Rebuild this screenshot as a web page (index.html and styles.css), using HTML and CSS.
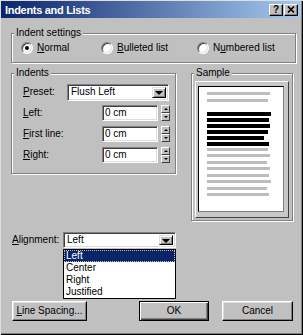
FILE: index.html
```html
<!DOCTYPE html>
<html lang="en">
<head>
	<meta charset="utf-8">
	<title>Indents and Lists</title>
	<link rel="stylesheet" href="styles.css">
</head>
<body>
<div class="window">
	<div class="titlebar">
		<span class="title">Indents and Lists</span>
		<span class="caps">
			<span class="cap">?</span>
			<span class="cap"><svg width="8" height="7" viewBox="0 0 8 7"><path d="M1 0.5 L7 6.5 M7 0.5 L1 6.5" stroke="#000" stroke-width="1.7" fill="none"/></svg></span>
		</span>
	</div>
	<div class="content">
		<div class="group settings">
			<span class="caption">Indent settings</span>
			<div class="radios">
				<span class="radio r-normal"><span class="dot on"></span><span><u>N</u>ormal</span></span>
				<span class="radio r-bullet"><span class="dot"></span><span><u>B</u>ulleted list</span></span>
				<span class="radio"><span class="dot"></span><span>N<u>u</u>mbered list</span></span>
			</div>
		</div>

		<div class="mid">
			<div class="group indents">
				<span class="caption">Indents</span>
				<div class="rows">
					<div class="row">
						<span class="lbl preset-lbl"><u>P</u>reset:</span>
						<span class="field combo preset"><span>Flush Left</span><span class="drop"></span></span>
					</div>
					<div class="row">
						<span class="lbl"><u>L</u>eft:</span>
						<span class="field num">0 cm</span>
						<span class="spin"><span class="up"></span><span class="dn"></span></span>
					</div>
					<div class="row">
						<span class="lbl"><u>F</u>irst line:</span>
						<span class="field num">0 cm</span>
						<span class="spin"><span class="up"></span><span class="dn"></span></span>
					</div>
					<div class="row">
						<span class="lbl"><u>R</u>ight:</span>
						<span class="field num">0 cm</span>
						<span class="spin"><span class="up"></span><span class="dn"></span></span>
					</div>
				</div>
			</div>

			<div class="group sample">
				<span class="caption">Sample</span>
				<div class="panel">
					<div class="page">
						<div class="ln" style="width:63px"></div>
						<div class="ln gap" style="width:61px"></div>
						<div class="ln b" style="width:64px"></div>
						<div class="ln b" style="width:62px"></div>
						<div class="ln b" style="width:63px"></div>
						<div class="ln b" style="width:61px"></div>
						<div class="ln b" style="width:57px"></div>
						<div class="ln b" style="width:62px"></div>
						<div class="ln" style="width:61px"></div>
						<div class="ln" style="width:63px"></div>
						<div class="ln" style="width:60px"></div>
						<div class="ln" style="width:63px"></div>
						<div class="ln" style="width:62px"></div>
						<div class="ln" style="width:64px"></div>
						<div class="ln" style="width:60px"></div>
						<div class="ln" style="width:62px"></div>
					</div>
				</div>
			</div>
		</div>

		<div class="align-row">
			<span class="lbl align-lbl"><u>A</u>lignment:</span>
			<div class="combo-wrap">
				<span class="field combo align"><span>Left</span><span class="drop"></span></span>
				<ul class="list">
					<li class="sel">Left</li>
					<li>Center</li>
					<li>Right</li>
					<li>Justified</li>
				</ul>
			</div>
		</div>

		<div class="buttons">
			<span class="btn spacing"><u>L</u>ine Spacing...</span>
			<span class="btn ok">OK</span>
			<span class="btn cancel">Cancel</span>
		</div>
	</div>
</div>
</body>
</html>
```

FILE: styles.css
```css
body {
	margin: 0;
	font-family: "Liberation Sans", Arial, sans-serif;
	font-size: 10px;
	line-height: 12px;
	color: #000;
	background: #c0c0c0;
}
.window {
	width: 303px;
	height: 335px;
	box-sizing: border-box;
	padding: 1px 2px 0 1px;
	background: #c0c0c0;
	box-shadow: inset 1px 1px #dfdfdf, inset -1px -1px #000, inset -2px -2px #808080;
}

/* title bar */
.titlebar {
	height: 17px;
	display: flex;
	align-items: center;
	justify-content: space-between;
	padding: 0 3px 0 4px;
	background: linear-gradient(to right, #0a246a, #a6caf0);
}
.title {
	color: #fff;
	font-weight: bold;
	font-size: 11px;
	letter-spacing: -.3px;
}
.caps {
	display: flex;
	gap: 1px;
}
.cap {
	width: 14px;
	height: 12px;
	box-sizing: border-box;
	display: flex;
	align-items: center;
	justify-content: center;
	background: #c0c0c0;
	border: 1px solid;
	border-color: #fff #000 #000 #fff;
	box-shadow: inset -1px -1px #808080;
	font-weight: bold;
	font-size: 10px;
}

.content {
	padding: 15px 5px 0 10px;
}

/* etched group boxes */
.group {
	box-sizing: border-box;
	border: 1px solid #808080;
	box-shadow: 1px 1px #fff, inset 1px 1px #fff;
}
.caption {
	display: table;
	margin: -7px 0 0 2px;
	padding: 0 2px;
	background: #c0c0c0;
}

.settings {
	padding-bottom: 6px;
}
.radios {
	display: flex;
	height: 16px;
	margin-top: 1px;
	padding-left: 9px;
}
.radio {
	display: flex;
	align-items: center;
	gap: 4px;
}
.r-normal {
	width: 80px;
}
.r-bullet {
	width: 96px;
}
.dot {
	width: 12px;
	height: 12px;
	box-sizing: border-box;
	border-radius: 50%;
	border: 1px solid;
	border-color: #808080 #fff #fff #808080;
	box-shadow: inset 1px 1px #404040, inset -1px -1px #dfdfdf;
	background: #fff;
	display: flex;
	align-items: center;
	justify-content: center;
}
.dot.on::after {
	content: "";
	width: 4px;
	height: 4px;
	border-radius: 50%;
	background: #000;
}

.mid {
	display: flex;
	align-items: flex-start;
	gap: 15px;
	margin-top: 10px;
}
.indents {
	width: 165px;
	padding-bottom: 10px;
}
.rows {
	display: flex;
	flex-direction: column;
	gap: 5px;
	padding: 5px 5px 0 11px;
}
.row {
	display: flex;
	align-items: center;
	height: 16px;
}
.lbl {
	flex: 1;
}
.preset-lbl {
	flex: none;
	width: 44px;
}

/* sunken fields */
.field {
	box-sizing: border-box;
	display: flex;
	align-items: center;
	height: 16px;
	border: 1px solid;
	border-color: #808080 #fff #fff #808080;
	box-shadow: inset 1px 1px #404040, inset -1px -1px #dfdfdf;
	background: #fff;
	padding: 0 2px;
	white-space: nowrap;
}
.num {
	width: 56px;
}
.combo {
	padding: 2px 2px 2px 3px;
}
.preset {
	width: 102px;
	height: 17px;
}
.drop {
	margin-left: auto;
	width: 14px;
	height: 100%;
	box-sizing: border-box;
	background: #c0c0c0;
	border: 1px solid;
	border-color: #dfdfdf #000 #000 #dfdfdf;
	box-shadow: inset 1px 1px #fff, inset -1px -1px #808080;
	display: flex;
	align-items: center;
	justify-content: center;
}
.drop::after {
	content: "";
	border-left: 4px solid transparent;
	border-right: 4px solid transparent;
	border-top: 4px solid #000;
	margin-top: 1px;
}
.spin {
	display: flex;
	flex-direction: column;
	width: 9px;
	height: 16px;
	margin-left: 3px;
}
.spin span {
	flex: 1;
	box-sizing: border-box;
	background: #c0c0c0;
	border: 1px solid;
	border-color: #fff #404040 #404040 #fff;
	display: flex;
	align-items: center;
	justify-content: center;
}
.spin .up::after {
	content: "";
	border-left: 2px solid transparent;
	border-right: 2px solid transparent;
	border-bottom: 2px solid #000;
}
.spin .dn::after {
	content: "";
	border-left: 2px solid transparent;
	border-right: 2px solid transparent;
	border-top: 2px solid #000;
}

/* sample preview */
.sample {
	width: 102px;
}
.panel {
	height: 137px;
	box-sizing: border-box;
	margin: 2px 3px 2px 3px;
	border: 1px solid;
	border-color: #fff #404040 #404040 #fff;
	background: #c8c8c8;
	padding: 4px 4px 0 2px;
}
.page {
	height: 126px;
	box-sizing: border-box;
	border: 1px solid;
	border-color: #000 #808080 #808080 #000;
	background: #fff;
	padding: 5px 0 0 8px;
}
.ln {
	height: 3px;
	margin-bottom: 3.5px;
	background: #bdbdbd;
}
.ln.gap {
	margin-bottom: 10px;
}
.ln.b {
	height: 4px;
	margin-bottom: 2px;
	background: #000;
}

/* alignment */
.align-row {
	display: flex;
	align-items: center;
	margin-top: 11px;
	height: 16px;
}
.align-lbl {
	flex: none;
	width: 51px;
	margin-left: 1px;
}
.combo-wrap {
	position: relative;
}
.align {
	width: 113px;
}
.list {
	position: absolute;
	top: 17px;
	left: 0;
	width: 113px;
	box-sizing: border-box;
	margin: 0;
	padding: 0;
	list-style: none;
	border: 1px solid #000;
	background: #fff;
}
.list li {
	height: 12px;
	padding-left: 2px;
}
.list .sel {
	background: #0a246a;
	color: #fff;
	outline: 1px dotted #c0c0c0;
	outline-offset: -1px;
}

/* buttons */
.buttons {
	display: flex;
	gap: 13px;
	margin: 53px 3px 0 1px;
}
.btn {
	height: 20px;
	box-sizing: border-box;
	display: flex;
	align-items: center;
	justify-content: center;
	background: #c0c0c0;
	border: 1px solid;
	border-color: #fff #000 #000 #fff;
	box-shadow: inset -1px -1px #808080, inset 1px 1px #dfdfdf;
}
.spacing {
	width: 75px;
}
.ok {
	width: 70px;
	margin-left: auto;
	border-color: #000;
	box-shadow: inset 1px 1px #fff, inset -1px -1px #404040, inset -2px -2px #808080;
}
.cancel {
	width: 71px;
}
```
